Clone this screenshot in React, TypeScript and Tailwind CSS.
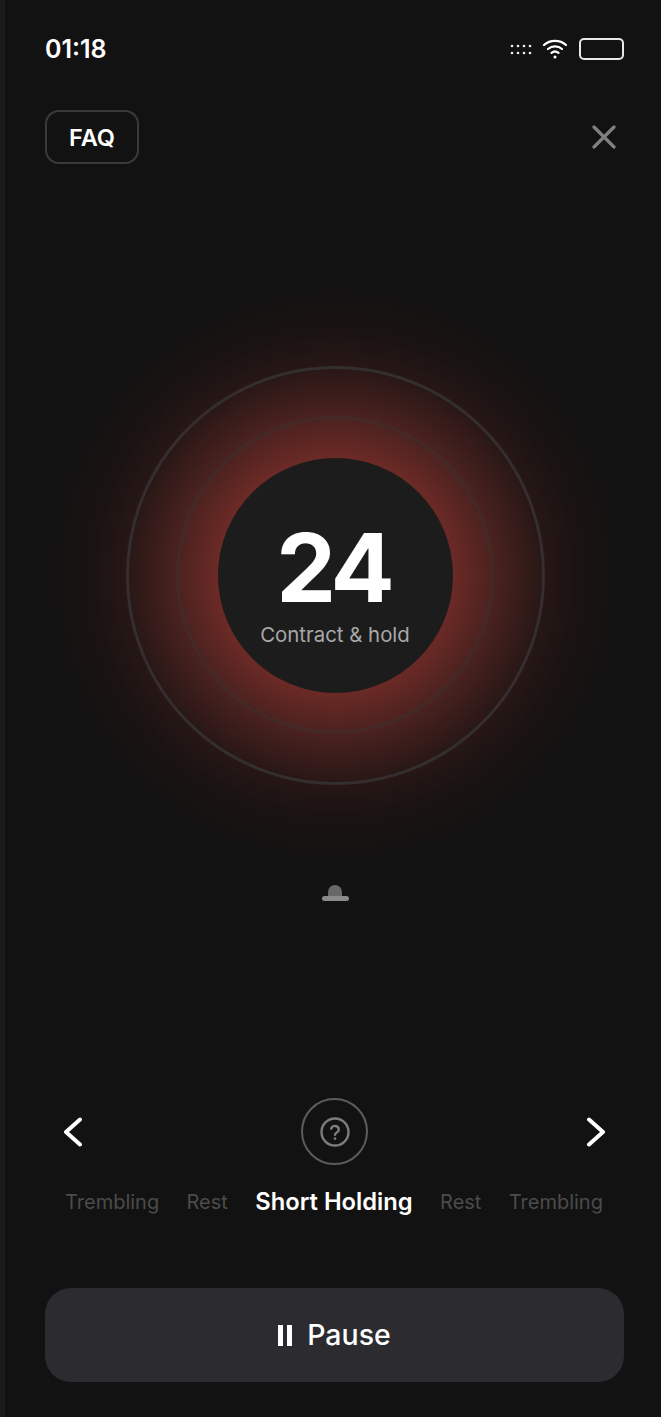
const steps = [
  { label: "Trembling", active: false },
  { label: "Rest", active: false },
  { label: "Short Holding", active: true },
  { label: "Rest", active: false },
  { label: "Trembling", active: false },
]

function StatusIcons() {
  return (
    <div className="flex items-center gap-[11px]">
      {/* signal dots */}
      <svg width="22" height="12" viewBox="0 0 22 12" fill="#f0f0f0" className="mr-[-1px]">
        {[1, 7, 13, 19].map((x) => (
          <g key={x}>
            <circle cx={x + 1} cy="3" r="1.3" />
            <circle cx={x + 1} cy="10" r="1.3" />
          </g>
        ))}
      </svg>
      <svg width="26" height="22" viewBox="0 0 26 22" fill="none" stroke="#fff" strokeWidth="2.3" strokeLinecap="round">
        <path d="M2 7C8 1.5 18 1.5 24 7" />
        <path d="M6 11C10 7.5 16 7.5 20 11" />
        <path d="M9.5 14.8C11.5 13.3 14.5 13.3 16.5 14.8" />
        <circle cx="13" cy="19" r="1.5" fill="#fff" stroke="none" />
      </svg>
      <div className="h-[22px] w-[45px] rounded-[5px] border-2 border-[#e8e8e8]" />
    </div>
  )
}

function Chevron({ flip }: { flip?: boolean }) {
  return (
    <svg width="20" height="30" viewBox="0 0 20 30" fill="none" stroke="#fff" strokeWidth="4" strokeLinecap="round" strokeLinejoin="round">
      <path d={flip ? "M3 2.5L17 15L3 27.5" : "M17 2.5L3 15L17 27.5"} />
    </svg>
  )
}

export default function App() {
  return (
    <div className="flex h-[1417px] w-[661px] overflow-hidden bg-[#121212] font-['Inter',sans-serif] text-white">
      <div className="w-[5px] shrink-0 bg-[#1b1b1b]" />
      <div className="flex min-w-0 flex-1 flex-col pl-[40px] pr-[37px]">
        <div className="mt-[36px] flex h-[26px] items-center justify-between">
          <span className="text-[25px] font-semibold leading-none">01:18</span>
          <StatusIcons />
        </div>

        <div className="mt-[48px] flex items-center justify-between">
          <button className="flex h-[54px] w-[94px] items-center justify-center rounded-[14px] border-2 border-[#3a3a3a] pt-[1px] text-[23.5px] font-semibold">
            FAQ
          </button>
          <svg width="24" height="24" viewBox="0 0 24 24" fill="none" stroke="#808080" strokeWidth="3.2" strokeLinecap="round" className="mr-[8px]">
            <path d="M2 2L22 22M22 2L2 22" />
          </svg>
        </div>

        {/* breathing circle */}
        <div className="mt-[111px] flex h-[600px] items-center justify-center pl-[1px]">
          <div className="flex h-[600px] w-[600px] shrink-0 items-center justify-center rounded-full bg-[radial-gradient(circle,#6c2a26_0px,#6c2a26_117px,#4b221f_158px,#271716_209px,#1a1312_242px,#141212_280px,#121212_300px)]">
            <div className="flex h-[419px] w-[419px] items-center justify-center rounded-full border-[3px] border-[#342e2e]">
              <div className="flex h-[318px] w-[318px] items-center justify-center rounded-full border-[3px] border-[#432a27]">
                <div className="flex h-[235px] w-[235px] flex-col items-center rounded-full bg-[#1c1c1c]">
                  <span className="mt-[62px] pr-[3px] text-[95px] font-bold leading-[96px] tracking-[-4px]">24</span>
                  <span className="mt-[7px] text-[20.4px] leading-[24px] text-[#a8a8a8]">Contract &amp; hold</span>
                </div>
              </div>
            </div>
          </div>
        </div>

        {/* sunrise marker */}
        <div className="mt-[10px] flex flex-col items-center pl-[1px]">
          <div className="h-[11px] w-[14px] rounded-t-full bg-[#686868]" />
          <div className="h-[5px] w-[27px] rounded-full bg-[#8a8a8a]" />
        </div>

        <div className="mt-[197px] flex items-center justify-between pl-[18px] pr-[18px]">
          <Chevron />
          <div className="flex h-[67px] w-[67px] items-center justify-center rounded-full border-2 border-[#5c5c5c]">
            <svg width="32" height="32" viewBox="0 0 32 32" fill="none" stroke="#7c7c7c" strokeWidth="2.4" strokeLinecap="round">
              <circle cx="16" cy="16" r="13.5" />
              <path d="M12.2 12.6a3.9 3.9 0 0 1 7.6 1.1c0 2.5-3.8 3.2-3.8 5" />
              <circle cx="16" cy="22.6" r="1.3" fill="#7c7c7c" stroke="none" />
            </svg>
          </div>
          <Chevron flip />
        </div>

        <div className="mt-[20px] flex items-center justify-between pl-[20px] pr-[21px]">
          {steps.map((s, i) =>
            s.active ? (
              <span key={i} className="text-[23.75px] font-semibold leading-[34px] text-white">
                {s.label}
              </span>
            ) : (
              <span key={i} className="text-[20px] leading-[34px] text-[#4b4b4b]">
                {s.label}
              </span>
            ),
          )}
        </div>

        <button className="mt-[69px] flex h-[94px] w-full items-center justify-center gap-[15px] rounded-[26px] bg-[#2b2b30] text-[28.5px] font-medium">
          <span className="flex gap-[4px]">
            <span className="h-[21px] w-[5px] bg-white" />
            <span className="h-[21px] w-[5px] bg-white" />
          </span>
          Pause
        </button>
      </div>
    </div>
  )
}
